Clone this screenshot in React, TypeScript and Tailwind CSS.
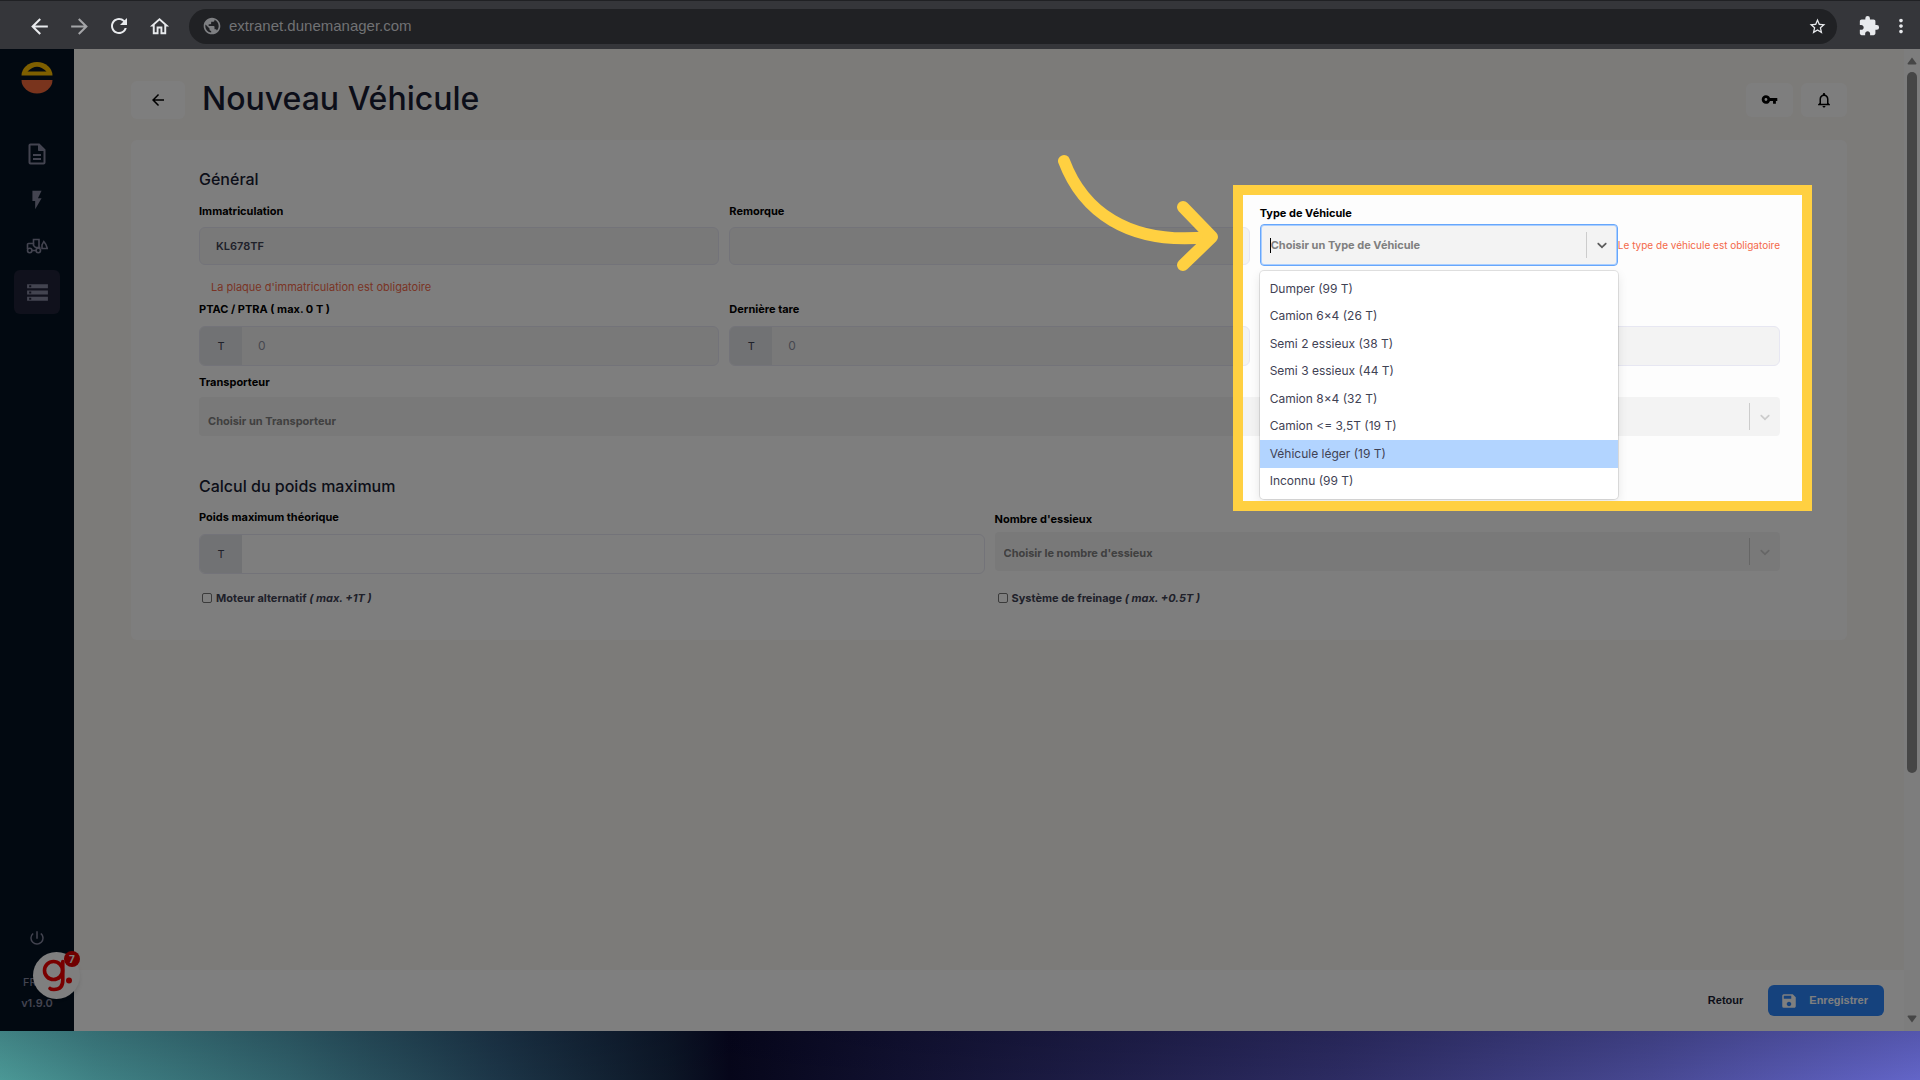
import type { ReactNode } from "react";
import {
  MdArrowBack,
  MdArrowForward,
  MdExtension,
  MdFlashOn,
  MdMoreVert,
  MdNotificationsNone,
  MdOutlineHome,
  MdPowerSettingsNew,
  MdPublic,
  MdRefresh,
  MdSave,
  MdStarBorder,
  MdStorage,
  MdVpnKey,
} from "react-icons/md";

const VEHICLE_TYPES = [
  "Dumper (99 T)",
  "Camion 6×4 (26 T)",
  "Semi 2 essieux (38 T)",
  "Semi 3 essieux (44 T)",
  "Camion 8×4 (32 T)",
  "Camion <= 3,5T (19 T)",
  "Véhicule léger (19 T)",
  "Inconnu (99 T)",
];
const HIGHLIGHTED = "Véhicule léger (19 T)";

function BrowserBar() {
  return (
    <header className="flex h-[49px] shrink-0 items-center border-t border-[#202124] bg-[#35363a] pt-[2px] pr-2 pl-6 text-[#e8eaed]">
      <div className="flex items-center gap-[10px]">
        <button aria-label="Précédent" className="flex size-[30px] items-center justify-center">
          <MdArrowBack size={25} />
        </button>
        <button aria-label="Suivant" className="flex size-[30px] items-center justify-center text-[#a4a5a8]">
          <MdArrowForward size={25} />
        </button>
        <button aria-label="Actualiser" className="flex size-[30px] items-center justify-center">
          <MdRefresh size={24} />
        </button>
        <button aria-label="Accueil" className="flex size-[30px] items-center justify-center">
          <MdOutlineHome size={23} />
        </button>
      </div>
      <div className="ml-[15px] flex h-[35px] flex-1 items-center rounded-full bg-[#202124] pr-[10px] pl-[13px]">
        <MdPublic size={20} className="text-[#7e7f82]" />
        <input
          aria-label="Adresse"
          defaultValue="extranet.dunemanager.com"
          className="ml-[7px] flex-1 bg-transparent font-['Liberation_Sans',sans-serif] text-[15px] text-[#717274] outline-none"
        />
        <button aria-label="Ajouter aux favoris">
          <MdStarBorder size={19} />
        </button>
      </div>
      <button aria-label="Extensions" className="ml-[21px]">
        <MdExtension size={22} />
      </button>
      <button aria-label="Menu" className="ml-[10px]">
        <MdMoreVert size={22} />
      </button>
    </header>
  );
}

function Logo() {
  return (
    <svg viewBox="0 0 32 32" className="size-8" aria-hidden="true">
      <path d="M0.5 13.5A15.5 13.5 0 0 1 31.5 13.5Z" fill="#fdbf00" />
      <path d="M6.5 9.5Q16 0 25.5 9.5Z" fill="#051323" />
      <path d="M0.5 18H31.5A15.5 13.5 0 0 1 0.5 18Z" fill="#f2693a" />
    </svg>
  );
}

function DocumentIcon() {
  return (
    <svg viewBox="0 0 18 22" className="h-[22px] w-[18px]" fill="none" stroke="currentColor" strokeWidth="2" aria-hidden="true">
      <path d="M2.5 1.5H11L16.5 7V19.5a1 1 0 0 1-1 1H2.5a1 1 0 0 1-1-1V2.5a1 1 0 0 1 1-1Z" />
      <path d="M10.5 1.5V7.5H16.5Z" fill="currentColor" strokeWidth="1" />
      <path d="M5 12H13M5 16H13" />
    </svg>
  );
}

function LoaderIcon() {
  return (
    <svg viewBox="0 0 22 16" className="h-4 w-[22px]" fill="none" stroke="currentColor" strokeWidth="1.6" aria-hidden="true">
      <path d="M1.5 11V6.5a1 1 0 0 1 1-1H7.5V1.5H13V9.5M5.5 12.5H10" />
      <path d="M7.5 5.5V7.5L9.5 9.5H14.5" />
      <circle cx="3.7" cy="12.5" r="2.2" />
      <circle cx="12.3" cy="12.5" r="2.2" />
      <path d="M17.8 3.5L16 7V10.5H21.3Q20.2 6 17.8 3.5Z" />
    </svg>
  );
}

function NavItem({ label, active, children }: { label: string; active?: boolean; children: ReactNode }) {
  return (
    <a
      href="#"
      aria-label={label}
      className={
        active
          ? "flex h-11 w-[46px] items-center justify-center rounded-md bg-[#202238]"
          : "flex h-11 w-[46px] items-center justify-center rounded-md"
      }
    >
      {children}
    </a>
  );
}

function Sidebar() {
  return (
    <aside className="relative flex w-[74px] shrink-0 flex-col items-center bg-[#051323] pt-[13px] pb-[17px] text-[#8788a0]">
      <Logo />
      <nav className="mt-[38px] flex flex-col gap-[2px]">
        <NavItem label="Documents">
          <DocumentIcon />
        </NavItem>
        <NavItem label="Actions">
          <MdFlashOn size={22} />
        </NavItem>
        <NavItem label="Engins">
          <LoaderIcon />
        </NavItem>
        <NavItem label="Données" active>
          <MdStorage size={25} />
        </NavItem>
      </nav>
      <button aria-label="Déconnexion" className="mt-auto mb-[25px]">
        <MdPowerSettingsNew size={18} />
      </button>
      <div className="w-7 text-[11px] leading-[21px] font-medium">FR</div>
      <div className="text-[11px] leading-[21px] font-semibold">v1.9.0</div>
      <button aria-label="Aide, 7 notifications" className="absolute bottom-8 left-[33px] z-10 size-[47px] rounded-full bg-[#fefefe] shadow-md">
        <svg viewBox="0 0 47 47" className="size-full" fill="none" stroke="#f20000" strokeWidth="3.6" strokeLinecap="round" aria-hidden="true">
          <circle cx="20.5" cy="18.5" r="9" />
          <path d="M29.8 9.5V28Q29.8 37.5 21 37.5Q18 37.5 17 36.5" />
          <circle cx="36" cy="28.5" r="3" fill="#f20000" stroke="none" />
        </svg>
        <span className="absolute -top-px right-0 flex size-4 items-center justify-center rounded-full bg-[#e00000] text-[10px] font-bold text-white">
          7
        </span>
      </button>
    </aside>
  );
}

const LABEL = "block text-[11px] leading-4 font-bold text-black";
const FIELD = "w-full rounded-md border border-[#e7e7f2] px-4 text-[11px] text-[#3f4254]";
const CHECK_LABEL = "mt-[14px] flex h-5 items-center text-[11px] font-bold text-[#3f4254]";
const CHECKBOX = "mr-1 ml-[3px] size-[10px] appearance-none rounded-xs border border-[#767676] bg-white";

type UnitFieldProps = {
  id: string;
  label?: string;
  unit?: string;
  placeholder?: string;
  disabled?: boolean;
};

function UnitField({ id, label, unit, placeholder, disabled }: UnitFieldProps) {
  return (
    <div>
      <label htmlFor={id} className={LABEL}>
        {label ?? "\u00a0"}
      </label>
      <div
        className={
          disabled
            ? "mt-[9px] flex h-10 overflow-hidden rounded-md border border-[#e7e7f2] bg-[#f3f3f3]"
            : "mt-[9px] flex h-10 overflow-hidden rounded-md border border-[#e7e7f2] bg-[#fdfdfd]"
        }
      >
        {unit && <span className="flex w-[42px] items-center justify-center bg-[#e2e4e9] text-[11px] text-[#3f4254]">{unit}</span>}
        <input
          id={id}
          disabled={disabled}
          placeholder={placeholder}
          className="min-w-0 flex-1 bg-transparent px-4 text-[12px] text-[#3f4254] outline-none placeholder:text-[#8e90a0]"
        />
      </div>
    </div>
  );
}

function Chevron({ className }: { className: string }) {
  return (
    <svg viewBox="0 0 20 20" className={className} fill="currentColor" aria-hidden="true">
      <path d="M4.516 7.548c0.436-0.446 1.043-0.481 1.576 0l3.908 3.747 3.908-3.747c0.533-0.481 1.141-0.446 1.574 0 0.436 0.445 0.408 1.197 0 1.615-0.406 0.418-4.695 4.502-4.695 4.502-0.217 0.223-0.502 0.335-0.787 0.335s-0.57-0.112-0.789-0.335c0 0-4.287-4.084-4.695-4.502s-0.436-1.17 0-1.615z" />
    </svg>
  );
}

function ClosedSelect({ id, placeholder, low }: { id: string; placeholder: string; low?: boolean }) {
  return (
    <div className="relative flex h-[39px] items-center rounded-sm bg-[#f3f3f3]">
      <select
        id={id}
        disabled
        className={
          low
            ? "h-full w-full appearance-none bg-transparent pt-[10px] pr-10 pl-[9px] text-[11px] font-bold text-[#808080] opacity-100"
            : "h-full w-full appearance-none bg-transparent pt-1 pr-10 pl-[9px] text-[11px] font-bold text-[#808080] opacity-100"
        }
      >
        <option>{placeholder}</option>
      </select>
      <span className="pointer-events-none absolute right-0 flex h-full items-center text-[#cccccc]">
        <span className="h-[27px] w-px bg-[#cccccc]" />
        <Chevron className="mx-[7px] size-4" />
      </span>
    </div>
  );
}

function CurvedArrow() {
  return (
    <svg
      viewBox="0 0 162 120"
      className="absolute -top-8 right-full mr-[14px] h-[120px] w-[162px]"
      fill="none"
      stroke="#ffd041"
      strokeWidth="12"
      strokeLinecap="round"
      strokeLinejoin="round"
      aria-hidden="true"
    >
      <path d="M7 8C25 56 69 93 152 84" />
      <path d="M126 54L155 84L126 112" />
    </svg>
  );
}

/* Guided-tour highlight: a frame round the step's field; its spread shadow dims the rest of the app. */
function Spotlight() {
  return (
    <div className="pointer-events-none absolute -top-[18px] -right-8 -left-[27px] z-50 h-[326px] shadow-[0_0_0_3000px_rgba(0,0,0,0.5)]">
      <div className="h-full border-[10px] border-[#ffd041]" />
      <CurvedArrow />
    </div>
  );
}

function VehicleTypeField() {
  return (
    <div className="relative">
      <label htmlFor="type" className={LABEL + " pt-[2px]"}>
        Type de Véhicule
      </label>
      <div className="mt-[3px] flex items-center">
        <div className="relative min-w-0 flex-1">
          <div className="flex h-[42px] items-center rounded-[4px] border border-[#66a6fb] bg-[#f3f3f3] pl-[9px] ring-1 ring-[#a9ceff] ring-inset">
            <span className="h-[15px] w-px bg-black" />
            <input
              id="type"
              role="combobox"
              aria-expanded="true"
              aria-controls="type-options"
              placeholder="Choisir un Type de Véhicule"
              className="min-w-0 flex-1 bg-transparent text-[11px] font-bold outline-none placeholder:text-[#808080]"
            />
            <span className="h-[26px] w-px bg-[#cccccc]" />
            <Chevron className="mx-[7px] size-4 text-[#5c5c5c]" />
          </div>
          <ul
            id="type-options"
            role="listbox"
            className="absolute inset-x-0 top-full z-20 mt-[5px] flex h-[228px] flex-col rounded-[4px] bg-white py-1 shadow-[0_0_0_1px_rgba(0,0,0,0.1),0_4px_11px_rgba(0,0,0,0.1)]"
          >
            {VEHICLE_TYPES.map((type) => (
              <li
                key={type}
                role="option"
                aria-selected={type === HIGHLIGHTED}
                className={
                  type === HIGHLIGHTED
                    ? "flex flex-1 items-center bg-[#b2d4ff] px-[10px] text-[12px] text-[#3f4254]"
                    : "flex flex-1 items-center px-[10px] text-[12px] text-[#3f4254]"
                }
              >
                {type}
              </li>
            ))}
          </ul>
        </div>
        <span className="text-[10px] whitespace-nowrap text-[#f4694a]">Le type de véhicule est obligatoire</span>
      </div>
      <Spotlight />
    </div>
  );
}

function VehicleForm() {
  return (
    <form className="mt-[21px] rounded-md bg-[#fdfdfd] pt-7 pr-[67px] pb-8 pl-[68px]">
      <h2 className="text-[16px] leading-[22px] font-medium text-[#181c32]">Général</h2>
      <div className="mt-[13px] grid grid-cols-3 gap-x-[10px]">
        <div>
          <label htmlFor="immatriculation" className={LABEL}>
            Immatriculation
          </label>
          <input
            id="immatriculation"
            disabled
            defaultValue="KL678TF"
            className={FIELD + " mt-2 h-[38px] bg-[#f3f3f3] font-semibold"}
          />
          <p className="mt-[14px] mb-[6px] pl-3 text-[11px] leading-4 text-[#f4694a]">La plaque d'immatriculation est obligatoire</p>
        </div>
        <div>
          <label htmlFor="remorque" className={LABEL}>
            Remorque
          </label>
          <input id="remorque" disabled className={FIELD + " mt-2 h-[38px] bg-[#f3f3f3]"} />
        </div>
        <VehicleTypeField />
        <UnitField id="ptac" label="PTAC / PTRA ( max. 0 T )" unit="T" placeholder="0" disabled />
        <UnitField id="tare" label="Dernière tare" unit="T" placeholder="0" disabled />
        <UnitField id="tare-max" disabled />
      </div>
      <label htmlFor="transporteur" className={LABEL + " mt-2 mb-[7px]"}>
        Transporteur
      </label>
      <ClosedSelect id="transporteur" placeholder="Choisir un Transporteur" low />

      <h2 className="mt-[39px] text-[16px] leading-[22px] font-medium text-[#181c32]">Calcul du poids maximum</h2>
      <div className="mt-3 grid grid-cols-2 gap-x-[10px]">
        <UnitField id="poids" label="Poids maximum théorique" unit="T" />
        <div>
          <label htmlFor="essieux" className={LABEL + " pt-[2px] mb-[5px]"}>
            Nombre d'essieux
          </label>
          <ClosedSelect id="essieux" placeholder="Choisir le nombre d'essieux" />
        </div>
        <label className={CHECK_LABEL}>
          <input type="checkbox" className={CHECKBOX} />
          <span>
            Moteur alternatif <em>( max. +1T )</em>
          </span>
        </label>
        <label className={CHECK_LABEL}>
          <input type="checkbox" className={CHECKBOX} />
          <span>
            Système de freinage <em>( max. +0.5T )</em>
          </span>
        </label>
      </div>
    </form>
  );
}

function Scrollbar() {
  return (
    <div className="flex w-4 shrink-0 flex-col items-center bg-[#fafafa] py-2" aria-hidden="true">
      <svg viewBox="0 0 10 8" className="h-2 w-[10px]">
        <path d="M5 0.5L9.5 6.5Q9.5 7.5 8.5 7.5H1.5Q0.5 7.5 0.5 6.5Z" fill="#8c8c8c" />
      </svg>
      <div className="mt-[7px] h-[72.6%] w-[10px] rounded-full bg-[#8c8c8c]" />
      <svg viewBox="0 0 10 8" className="mt-auto h-2 w-[10px]">
        <path d="M5 7.5L9.5 1.5Q9.5 0.5 8.5 0.5H1.5Q0.5 0.5 0.5 1.5Z" fill="#8c8c8c" />
      </svg>
    </div>
  );
}

export default function App() {
  return (
    <div className="flex h-screen flex-col bg-[#05061a] font-['Inter',sans-serif]">
      <BrowserBar />
      <div className="flex min-h-0 flex-1 overflow-hidden">
        <Sidebar />
        <div className="flex min-w-0 flex-1 flex-col bg-[#f9f6f2]">
          <main className="flex-1 px-[57px] pt-[31px]">
            <div className="flex h-[39px] items-center">
              <button aria-label="Retour à la liste" className="flex h-[38px] w-[54px] items-center justify-center rounded-md bg-[#fdfdfd] text-black">
                <MdArrowBack size={18} />
              </button>
              <h1 className="mb-[2px] ml-[17px] flex-1 text-[32px] leading-[37px] font-medium text-[#181c32]">Nouveau Véhicule</h1>
              <div className="flex gap-2">
                <button aria-label="Accès" className="flex h-[34px] w-[47px] items-center justify-center rounded-md bg-[#fdfdfd] text-black">
                  <MdVpnKey size={17} />
                </button>
                <button aria-label="Notifications" className="flex h-[34px] w-[46px] items-center justify-center rounded-md bg-[#fdfdfd] text-black">
                  <MdNotificationsNone size={18} />
                </button>
              </div>
            </div>
            <VehicleForm />
          </main>
          <footer className="flex h-[61px] shrink-0 items-center justify-end bg-white pr-5">
            <button className="px-[25px] font-['Liberation_Sans',sans-serif] text-[11px] font-bold text-[#181c32]">Retour</button>
            <button className="flex h-[31px] items-center gap-[11px] rounded-md bg-[#2a85fb] pr-4 pl-3 font-['Liberation_Sans',sans-serif] text-[11px] font-bold text-white">
              <MdSave size={18} />
              Enregistrer
            </button>
          </footer>
        </div>
        <Scrollbar />
      </div>
      <div className="h-[49px] shrink-0 bg-[linear-gradient(to_bottom,rgba(0,0,20,0.15),transparent),linear-gradient(to_right,#4b9896_0%,#3f8184_5%,#30606a_15%,#1c3547_26%,#0c1626_35%,#06061a_38%,#10102e_46%,#2d2c63_70%,#474892_86%,#6365c8_100%)]" />
    </div>
  );
}
